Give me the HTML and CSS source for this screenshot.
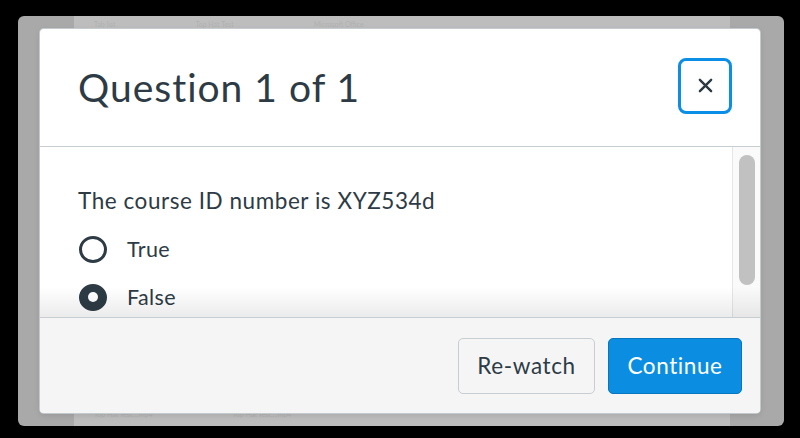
FILE: index.html
```html
<!DOCTYPE html>
<html lang="en">
<head>
<meta charset="utf-8">
<title>Question 1 of 1</title>
<link rel="stylesheet" href="styles.css">
</head>
<body>
<div class="backdrop">
  <div class="page">
    <div class="page-top"><span class="ghost">Tab list</span><span class="ghost">Top Hat Test</span><span class="ghost">Microsoft Office</span></div>
    <div class="page-bottom"><span class="ghost">Top Hat Test....mp4</span><span class="ghost">Top Hat Test....mp4</span></div>
  </div>
  <div class="dialog" role="dialog" aria-label="Question 1 of 1">
    <div class="dialog-header">
      <h2 class="dialog-title">Question 1 of 1</h2>
      <button class="close-btn" aria-label="Close">
        <svg width="16" height="16" viewBox="0 0 16 16"><path d="M2 2 L14 14 M14 2 L2 14" stroke="#2d3b45" stroke-width="2.6" stroke-linecap="round"/></svg>
      </button>
    </div>
    <div class="dialog-body">
      <div class="body-content">
        <p class="question">The course ID number is XYZ534d</p>
        <div class="option"><span class="radio"></span><span class="option-label">True</span></div>
        <div class="option"><span class="radio checked"></span><span class="option-label">False</span></div>
      </div>
      <div class="scroll-track"><div class="scroll-thumb"></div></div>
      <div class="fade"></div>
    </div>
    <div class="dialog-footer">
      <button class="btn btn-secondary">Re-watch</button>
      <button class="btn btn-primary">Continue</button>
    </div>
  </div>
</div>
</body>
</html>
```
FILE: styles.css
```css
* { box-sizing: border-box; }
html, body { margin: 0; padding: 0; }
body {
  width: 800px;
  height: 438px;
  background: #000;
  font-family: Lato, "Noto Sans", sans-serif;
  color: #2d3b45;
  overflow: hidden;
}
.backdrop {
  position: relative;
  width: 766px;
  height: 410px;
  margin: 16px 0 0 18px;
  background: #a9a9a9;
  border-radius: 6px;
  overflow: hidden;
  display: flex;
}
.page {
  margin-left: 56px;
  width: 656px;
  background: #bdbdbd;
  display: flex;
  flex-direction: column;
  justify-content: space-between;
}
.page-top, .page-bottom {
  display: flex;
  gap: 80px;
  padding: 4px 20px;
  font-size: 7px;
  color: #b1b1b1;
}
.page-bottom { padding-bottom: 8px; }
.dialog {
  position: absolute;
  left: 22px;
  top: 13px;
  width: 720px;
  height: 384px;
  background: #fff;
  border-radius: 4px;
  box-shadow: 0 0 0 1px rgba(199, 205, 209, 0.9), 0 2px 6px rgba(0,0,0,0.12);
  display: flex;
  flex-direction: column;
  overflow: hidden;
}
.dialog-header {
  height: 118px;
  flex: none;
  display: flex;
  align-items: center;
  justify-content: space-between;
  padding: 0 28px 0 38px;
  border-bottom: 1px solid #c7cdd1;
}
.dialog-title {
  margin: 0;
  font-size: 39px;
  font-weight: 400;
  line-height: 47px;
  letter-spacing: 1px;
  color: #2d3b45;
}
.close-btn {
  width: 54px;
  height: 56px;
  margin-top: -4px;
  border: 3px solid #0b8ee5;
  border-radius: 8px;
  background: #fff;
  display: flex;
  align-items: center;
  justify-content: center;
  padding: 0;
}
.close-btn svg { width: 15px; height: 15px; }
.dialog-body {
  position: relative;
  height: 171px;
  flex: none;
  display: flex;
  border-bottom: 1px solid #c7cdd1;
}
.body-content {
  flex: 1;
  padding: 40px 0 0 38px;
}
.question {
  margin: 0 0 10px;
  font-size: 22.5px;
  line-height: 28px;
  letter-spacing: 0.55px;
}
.option {
  height: 48px;
  display: flex;
  align-items: center;
  gap: 20px;
  padding-left: 1px;
}
.radio {
  width: 28px;
  height: 27px;
  border-radius: 50%;
  border: 3.5px solid #2d3b45;
  background: #fff;
  display: flex;
  align-items: center;
  justify-content: center;
}
.radio.checked {
  background: #2d3b45;
}
.radio.checked::after {
  content: "";
  width: 10px;
  height: 10px;
  border-radius: 50%;
  background: #fff;
}
.option-label {
  font-size: 21.5px;
  line-height: 28px;
  letter-spacing: 0.4px;
}
.scroll-track {
  width: 28px;
  flex: none;
  background: #fafafa;
  border-left: 1px solid #e6e6e6;
  padding: 8px 0 0 6px;
}
.scroll-thumb {
  width: 16px;
  height: 130px;
  border-radius: 8px;
  background: #c1c1c1;
}
.fade {
  position: absolute;
  left: 0;
  right: 0;
  bottom: 0;
  height: 30px;
  background: linear-gradient(to bottom, rgba(0,0,0,0), rgba(0,0,0,0.08));
  pointer-events: none;
}
.dialog-footer {
  flex: 1;
  background: #f5f5f5;
  display: flex;
  justify-content: flex-end;
  align-items: center;
  gap: 13px;
  padding: 0 18px 0 0;
}
.btn {
  height: 56px;
  border-radius: 5px;
  font-family: Lato, "Noto Sans", sans-serif;
  font-size: 22.5px;
  letter-spacing: 0.6px;
  padding: 0;
}
.btn-secondary {
  width: 137px;
  background: #f5f5f5;
  border: 1px solid #c7cdd1;
  color: #2d3b45;
}
.btn-primary {
  width: 134px;
  background: #0b8ee2;
  border: 1px solid #0876bf;
  color: #fff;
}
```
